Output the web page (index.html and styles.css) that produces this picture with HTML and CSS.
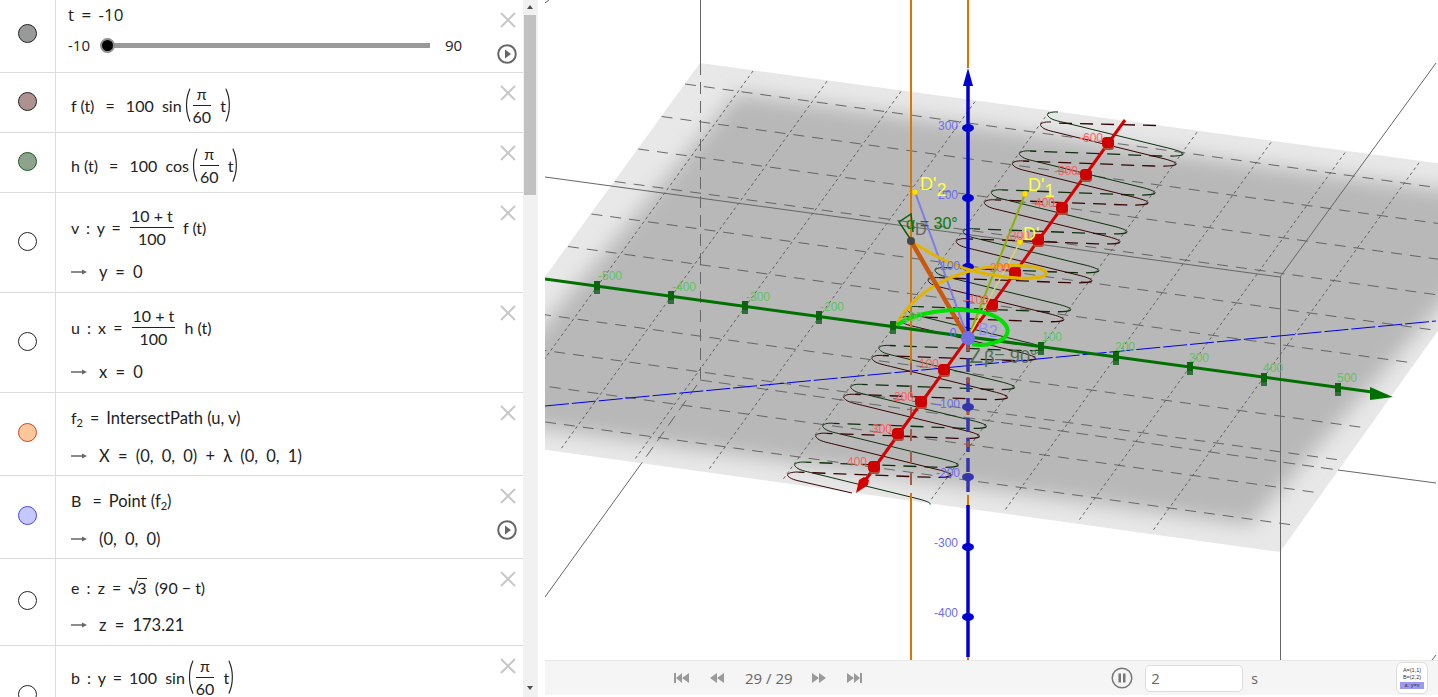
FILE: index.html
```html
<!DOCTYPE html>
<html lang="en">
<head>
  <meta charset="UTF-8" />
  <title>GeoGebra 3D</title>
  <link rel="stylesheet" href="styles.css">
</head>
<body>
  <div class="app">
    <aside class="algebra">
      <div class="rows">
        <div class="row row-slider">
          <div class="marble-cell"><span class="marble marble-gray"></span></div>
          <div class="expr">
            <div class="slider-title">t = -10</div>
            <div class="slider-line">
              <span class="slider-min">-10</span>
              <div class="slider-track"><span class="slider-knob"></span></div>
              <span class="slider-max">90</span>
            </div>
          </div>
          <div class="actions">
            <svg class="close" viewBox="0 0 16 16"><path d="M1 1L15 15M15 1L1 15"/></svg>
            <svg class="play" viewBox="0 0 20 20"><circle cx="10" cy="10" r="8.8"/><path d="M8 5.5L14 10L8 14.5Z"/></svg>
          </div>
        </div>

        <div class="row row-60">
          <div class="marble-cell"><span class="marble marble-rose"></span></div>
          <div class="expr">
            <div class="math">f (t) <i class="eq">=</i> 100&nbsp; sin <span class="paren">(</span><span class="frac"><span>π</span><span>60</span></span>&nbsp; t<span class="paren">)</span></div>
          </div>
          <div class="actions"><svg class="close" viewBox="0 0 16 16"><path d="M1 1L15 15M15 1L1 15"/></svg></div>
        </div>

        <div class="row row-60">
          <div class="marble-cell"><span class="marble marble-green"></span></div>
          <div class="expr">
            <div class="math">h (t) <i class="eq">=</i> 100&nbsp; cos <span class="paren">(</span><span class="frac"><span>π</span><span>60</span></span>&nbsp; t<span class="paren">)</span></div>
          </div>
          <div class="actions"><svg class="close" viewBox="0 0 16 16"><path d="M1 1L15 15M15 1L1 15"/></svg></div>
        </div>

        <div class="row row-100">
          <div class="marble-cell"><span class="marble"></span></div>
          <div class="expr">
            <div class="math"><span class="lhs">v : y = </span><span class="frac"><span>10 + t</span><span>100</span></span>&nbsp; f (t)</div>
            <div class="math output"><svg class="arrow" viewBox="0 0 16 6"><path d="M0 3H13"/><path class="tip" d="M11 0.5L16 3L11 5.5Z"/></svg>y = 0</div>
          </div>
          <div class="actions"><svg class="close" viewBox="0 0 16 16"><path d="M1 1L15 15M15 1L1 15"/></svg></div>
        </div>

        <div class="row row-100">
          <div class="marble-cell"><span class="marble"></span></div>
          <div class="expr">
            <div class="math"><span class="lhs">u : x = </span><span class="frac"><span>10 + t</span><span>100</span></span>&nbsp; h (t)</div>
            <div class="math output"><svg class="arrow" viewBox="0 0 16 6"><path d="M0 3H13"/><path class="tip" d="M11 0.5L16 3L11 5.5Z"/></svg>x = 0</div>
          </div>
          <div class="actions"><svg class="close" viewBox="0 0 16 16"><path d="M1 1L15 15M15 1L1 15"/></svg></div>
        </div>

        <div class="row row-83">
          <div class="marble-cell"><span class="marble marble-orange"></span></div>
          <div class="expr">
            <div class="math"><span>f<sub>2</sub></span> <i class="eq">=</i> <span class="word">IntersectPath (u, v)</span></div>
            <div class="math output"><svg class="arrow" viewBox="0 0 16 6"><path d="M0 3H13"/><path class="tip" d="M11 0.5L16 3L11 5.5Z"/></svg>X = (0, 0, 0) + λ (0, 0, 1)</div>
          </div>
          <div class="actions"><svg class="close" viewBox="0 0 16 16"><path d="M1 1L15 15M15 1L1 15"/></svg></div>
        </div>

        <div class="row row-83">
          <div class="marble-cell"><span class="marble marble-blue"></span></div>
          <div class="expr">
            <div class="math">B <i class="eq">=</i> <span class="word">Point (f<sub>2</sub>)</span></div>
            <div class="math output"><svg class="arrow" viewBox="0 0 16 6"><path d="M0 3H13"/><path class="tip" d="M11 0.5L16 3L11 5.5Z"/></svg>(0, 0, 0)</div>
          </div>
          <div class="actions">
            <svg class="close" viewBox="0 0 16 16"><path d="M1 1L15 15M15 1L1 15"/></svg>
            <svg class="play" viewBox="0 0 20 20"><circle cx="10" cy="10" r="8.8"/><path d="M8 5.5L14 10L8 14.5Z"/></svg>
          </div>
        </div>

        <div class="row row-87">
          <div class="marble-cell"><span class="marble"></span></div>
          <div class="expr">
            <div class="math"><span class="lhs">e : z = </span>√<span class="radicand">3</span>&nbsp; (90 − t)</div>
            <div class="math output"><svg class="arrow" viewBox="0 0 16 6"><path d="M0 3H13"/><path class="tip" d="M11 0.5L16 3L11 5.5Z"/></svg>z = 173.21</div>
          </div>
          <div class="actions"><svg class="close" viewBox="0 0 16 16"><path d="M1 1L15 15M15 1L1 15"/></svg></div>
        </div>

        <div class="row row-100 row-last">
          <div class="marble-cell"><span class="marble"></span></div>
          <div class="expr expr-top">
            <div class="math"><span class="lhs">b : y = </span>100&nbsp; sin <span class="paren">(</span><span class="frac"><span>π</span><span>60</span></span>&nbsp; t<span class="paren">)</span></div>
          </div>
          <div class="actions"><svg class="close" viewBox="0 0 16 16"><path d="M1 1L15 15M15 1L1 15"/></svg></div>
        </div>
      </div>

      <div class="scrollbar">
        <span class="scroll-up"></span>
        <span class="scroll-thumb"></span>
        <span class="scroll-down"></span>
      </div>
    </aside>

    <main class="view">
      <svg class="scene" viewBox="545 0 893 660">
        <defs>
          <clipPath id="planeClip"><polygon points="700,63 1547,178 1280,552 431,434"/></clipPath>
          <filter id="soft" x="-20%" y="-20%" width="140%" height="140%"><feGaussianBlur stdDeviation="10"/></filter>
          <line id="gridY" x1="753" y1="71" x2="486" y2="440"/>
          <line id="gridX" x1="685" y1="84" x2="1527" y2="200"/>
          <path id="turnSolid" d="M1058 112C1050 111.500 1046 114 1048 116C1051 120 1058 121 1066 123L1172 149C1181 151.500 1184 153 1183 154.500"/>
          <path id="turnDash" d="M1183 154.500C1180 156 1172 156.500 1160 156L1030 151"/>
          <g id="tickRed"><rect class="tick-shade" x="-5" y="-1" width="11" height="8" rx="3"/><rect class="tick-red" x="-6" y="-6" width="12" height="11" rx="4"/></g>
          <g id="tickGreen"><rect class="tick-green-shade" x="-3" y="0" width="6" height="7"/><rect class="tick-green" x="-3" y="-6" width="6" height="9"/></g>
        </defs>

        <!-- plane -->
        <polygon class="plane-edge" points="700,63 1547,178 1280,552 431,434"/>
        <g clip-path="url(#planeClip)">
          <polygon class="plane-core" filter="url(#soft)" points="737,93 1530,202 1250,525 467,418"/>
          <g class="grid-y">
            <use href="#gridY"/>
            <use href="#gridY" x="74" y="10.200"/>
            <use href="#gridY" x="148" y="20.400"/>
            <use href="#gridY" x="222" y="30.600"/>
            <use href="#gridY" x="296" y="40.800"/>
            <use href="#gridY" x="370" y="51"/>
            <use href="#gridY" x="444" y="61.200"/>
            <use href="#gridY" x="518" y="71.400"/>
            <use href="#gridY" x="592" y="81.600"/>
            <use href="#gridY" x="666" y="91.800"/>
          </g>
          <g class="grid-x">
            <use href="#gridX"/>
            <use href="#gridX" x="-23.400" y="32.500"/>
            <use href="#gridX" x="-46.800" y="65"/>
            <use href="#gridX" x="-70.200" y="97.500"/>
            <use href="#gridX" x="-93.600" y="130"/>
            <use href="#gridX" x="-117" y="162.500"/>
            <use href="#gridX" x="-163.800" y="227.500"/>
            <use href="#gridX" x="-187.200" y="260"/>
            <use href="#gridX" x="-210.600" y="292.500"/>
            <use href="#gridX" x="-234" y="325"/>
          </g>
        </g>

        <!-- bounding box -->
        <path class="box" d="M700.500 0V63M1280.500 277V660M545 177L1280 277L1436 63M1338 470L1436 483M545 597L641 464M545 3L549 0M1432 660L1436 655"/>
        <path class="box box-dash" d="M700.500 63V380L641 464M700 380L1338 470"/>

        <!-- curves -->
        <g class="helix helix-green">
          <use href="#turnSolid"/><use href="#turnDash" class="dash"/>
          <g transform="translate(-28.100 38.900)"><use href="#turnSolid"/><use href="#turnDash" class="dash"/></g>
          <g transform="translate(-56.200 77.800)"><use href="#turnSolid"/><use href="#turnDash" class="dash"/></g>
          <g transform="translate(-84.300 116.700)"><use href="#turnSolid"/><use href="#turnDash" class="dash"/></g>
          <g transform="translate(-112.400 155.600)"><use href="#turnSolid"/><use href="#turnDash" class="dash"/></g>
          <g transform="translate(-140.500 194.500)"><use href="#turnSolid"/><use href="#turnDash" class="dash"/></g>
          <g transform="translate(-168.600 233.400)"><use href="#turnSolid"/><use href="#turnDash" class="dash"/></g>
          <g transform="translate(-196.700 272.300)"><use href="#turnSolid"/><use href="#turnDash" class="dash"/></g>
          <g transform="translate(-224.800 311.200)"><use href="#turnSolid"/><use href="#turnDash" class="dash"/></g>
          <g transform="translate(-252.900 350.100)"><use href="#turnSolid"/></g>
        </g>
        <g class="helix helix-red">
          <path class="dash" d="M1156 125.500L1052 123"/>
          <g transform="translate(-7 10)">
            <use href="#turnSolid"/><use href="#turnDash" class="dash"/>
            <g transform="translate(-28.100 38.900)"><use href="#turnSolid"/><use href="#turnDash" class="dash"/></g>
            <g transform="translate(-56.200 77.800)"><use href="#turnSolid"/><use href="#turnDash" class="dash"/></g>
            <g transform="translate(-84.300 116.700)"><use href="#turnSolid"/><use href="#turnDash" class="dash"/></g>
            <g transform="translate(-112.400 155.600)"><use href="#turnSolid"/><use href="#turnDash" class="dash"/></g>
            <g transform="translate(-140.500 194.500)"><use href="#turnSolid"/><use href="#turnDash" class="dash"/></g>
            <g transform="translate(-168.600 233.400)"><use href="#turnSolid"/><use href="#turnDash" class="dash"/></g>
            <g transform="translate(-196.700 272.300)"><use href="#turnSolid"/><use href="#turnDash" class="dash"/></g>
            <g transform="translate(-224.800 311.200)"><use href="#turnSolid"/><use href="#turnDash" class="dash"/></g>
          </g>
          <path d="M798 472C790 472 786 474 788 476C791 480 800 481 808 483L852 493"/>
        </g>

        <!-- blue line in the plane -->
        <path class="line-blue" d="M545 406L1436 321"/>

        <!-- orange lines -->
        <path class="orange" d="M911 0V363M911 493V660M968 0V68M968 495V505M968 657V660"/>
        <path class="orange-under" d="M911 363V493"/>

        <!-- axes -->
        <path class="axis-x" d="M545 279L1372 392"/>
        <polygon class="fill-x" points="1370,387 1393,397 1370,400"/>
        <g class="ticks">
          <use href="#tickGreen" x="597" y="287"/>
          <use href="#tickGreen" x="671" y="297"/>
          <use href="#tickGreen" x="745" y="307"/>
          <use href="#tickGreen" x="819" y="317"/>
          <use href="#tickGreen" x="893" y="327"/>
          <use href="#tickGreen" x="1041" y="348"/>
          <use href="#tickGreen" x="1116" y="358"/>
          <use href="#tickGreen" x="1190" y="368"/>
          <use href="#tickGreen" x="1264" y="379"/>
          <use href="#tickGreen" x="1338" y="389"/>
        </g>

        <path class="axis-y" d="M1125 120L862 485"/>
        <polygon class="fill-y" points="856,493 859,480 864,477 869,480 868,485"/>
        <g class="ticks">
          <use href="#tickRed" x="1108" y="143"/>
          <use href="#tickRed" x="1086" y="175"/>
          <use href="#tickRed" x="1062" y="208"/>
          <use href="#tickRed" x="1038" y="240"/>
          <use href="#tickRed" x="1015" y="273"/>
          <use href="#tickRed" x="992" y="305"/>
          <use href="#tickRed" x="944" y="370"/>
          <use href="#tickRed" x="921" y="402"/>
          <use href="#tickRed" x="898" y="434"/>
          <use href="#tickRed" x="874" y="467"/>
        </g>

        <path class="axis-z" d="M968 80V338M968 505V657"/>
        <path class="axis-z-under" d="M968 338V495"/>
        <path class="axis-z-brown" d="M968 345V495"/>
        <polygon class="fill-z" points="968,68 973,86 963,86"/>
        <ellipse class="tick-z" cx="968" cy="128" rx="6" ry="4"/>
        <ellipse class="tick-z" cx="968" cy="198" rx="6" ry="4"/>
        <ellipse class="tick-z" cx="968" cy="267" rx="6" ry="4"/>
        <ellipse class="tick-z-under" cx="968" cy="407" rx="6" ry="4"/>
        <ellipse class="tick-z-under" cx="968" cy="477" rx="6" ry="4"/>
        <ellipse class="tick-z" cx="968" cy="547" rx="6" ry="4"/>
        <ellipse class="tick-z" cx="968" cy="617" rx="6" ry="4"/>

        <!-- construction -->
        <path class="seg-d1" d="M1025 194L968 338"/>
        <path class="seg-d" d="M1020 242L968 338"/>
        <path class="seg-d2" d="M915 192L968 338"/>
        <path class="gold" d="M911 241C925 250 945 263 970 270C995 277 1030 281 1044 276C1052 272 1040 267 1025 266C1000 264 975 268 955 276C930 285 905 305 897 325"/>
        <path class="seg-brown" d="M911 241L967 338"/>
        <path class="ring" d="M897 325C915 312 950 308 975 311C1000 314 1010 326 1007 334C1004 342 985 347 972 344"/>
        <path class="wedge" d="M911 240L899 222L911 214L913 232"/>
        <circle class="pt-yellow" cx="915" cy="192" r="3"/>
        <circle class="pt-yellow" cx="1025" cy="194" r="3"/>
        <circle class="pt-yellow" cx="1020" cy="242" r="3"/>
        <circle class="pt-dark" cx="911" cy="241" r="4"/>
        <circle class="pt-origin" cx="968" cy="338" r="7"/>

        <!-- labels -->
        <g class="lbl-x">
          <text x="610" y="280">-500</text><text x="684" y="291">-400</text><text x="758" y="301">-300</text><text x="832" y="311">-200</text><text x="910" y="321">-100</text>
          <text x="1052" y="341">100</text><text x="1125" y="351">200</text><text x="1199" y="362">300</text><text x="1273" y="372">400</text><text x="1347" y="382">500</text>
        </g>
        <g class="lbl-y">
          <text x="1091" y="142">-600</text><text x="1066" y="175">-500</text><text x="1043" y="207">-400</text><text x="1018" y="240">-300</text><text x="998" y="272">-200</text><text x="977" y="304">-100</text>
          <text x="929" y="368">100</text><text x="904" y="401">200</text><text x="882" y="433">300</text><text x="857" y="466">400</text>
        </g>
        <g class="lbl-z">
          <text x="948" y="130">300</text><text x="948" y="199">200</text><text x="950" y="270">100</text>
          <text x="953" y="337">0</text>
          <text x="948" y="408">-100</text><text x="948" y="477">-200</text><text x="946" y="547">-300</text><text x="946" y="617">-400</text>
        </g>
        <text class="lbl-b" x="978" y="335">B<tspan dy="2">2</tspan></text>
        <text class="lbl-pt" x="920" y="190">D'<tspan dx="0" dy="6">2</tspan></text>
        <text class="lbl-pt" x="1028" y="191">D'<tspan dy="6">1</tspan></text>
        <text class="lbl-pt" x="1023" y="240">D'</text>
        <text class="lbl-d" x="915" y="235">D</text>
        <text class="lbl-alpha" x="906" y="229">α = 30°</text>
        <text class="lbl-beta" x="968" y="363">∠β= 90°</text>
      </svg>

      <div class="player">
        <div class="nav-left">
          <svg class="nav" viewBox="0 0 16 12"><path d="M1 1H3V11H1ZM9 1V11L3 6ZM16 1V11L9 6Z"/></svg>
          <svg class="nav" viewBox="0 0 16 12"><path d="M8 1V11L1 6ZM15 1V11L8 6Z"/></svg>
          <span class="steps">29 / 29</span>
          <svg class="nav" viewBox="0 0 16 12"><path d="M1 1V11L8 6ZM8 1V11L15 6Z"/></svg>
          <svg class="nav" viewBox="0 0 16 12"><path d="M0 1V11L7 6ZM7 1V11L13 6ZM13 1H15V11H13Z"/></svg>
        </div>
        <div class="nav-right">
          <svg class="pause" viewBox="0 0 22 22"><circle cx="11" cy="11" r="9.800"/><path d="M7.500 6.500H10V15.500H7.500ZM12 6.500H14.500V15.500H12Z"/></svg>
          <div class="speed">2</div>
          <span class="unit">s</span>
          <div class="table-btn">
            <span>A=(1,1)</span>
            <span>B=(2,2)</span>
            <span class="hl">a: y=x</span>
          </div>
        </div>
      </div>
    </main>
  </div>
</body>
</html>
```

FILE: styles.css
```css
html, body {
  margin: 0;
  height: 100%;
  overflow: hidden;
  background: white;
}

.app {
  display: flex;
  height: 697px;
  font-family: "Open Sans", sans-serif;
  color: #222;
}

/* algebra panel */
.algebra {
  display: flex;
  width: 538px;
  height: 697px;
  flex: none;
  overflow: hidden;
}

.rows {
  width: 523px;
  flex: none;
}

.row {
  display: flex;
  box-sizing: border-box;
  border-bottom: 1px solid #dcdcdc;
}

.row-slider { height: 73px; }
.row-60 { height: 60px; }
.row-100 { height: 100px; }
.row-83 { height: 83px; }
.row-87 { height: 87px; }

.marble-cell {
  display: flex;
  align-items: center;
  justify-content: center;
  width: 56px;
  flex: none;
  box-sizing: border-box;
  padding-bottom: 3px;
  border-right: 1px solid #dcdcdc;
}

.row-slider .marble-cell { padding-bottom: 6px; }

.marble {
  display: block;
  width: 17px;
  height: 17px;
  border-radius: 50%;
  border: 1.500px solid #222;
  background: white;
}

.marble-gray { background: #979a98; }
.marble-rose { background: #ae9292; }
.marble-green { background: #8da38d; border-color: #1d5a1d; }
.marble-orange { background: #fcc79a; border-color: #d8421a; }
.marble-blue { background: #c6c8fb; border-color: #4a4ad0; }

.expr {
  flex: 1;
  display: flex;
  flex-direction: column;
  justify-content: center;
  box-sizing: border-box;
  padding-left: 15px;
  padding-top: 5px;
  gap: 16px;
}

.row-100 .expr {
  padding-top: 14px;
  gap: 23px;
}

.row-87 .expr {
  padding-top: 8px;
  gap: 15px;
}

.expr-top {
  justify-content: flex-start;
}

.row-last .expr {
  padding-top: 20px;
}

.math {
  display: flex;
  align-items: center;
  font-family: Lato, sans-serif;
  font-size: 16px;
  white-space: pre;
  height: 22px;
  color: #222;
}

.lhs {
  word-spacing: 3px;
}

.math sub {
  font-size: 11px;
  vertical-align: -3px;
  line-height: 0;
}

.word {
  font-size: 16.500px;
}

.eq {
  font-style: normal;
  margin: 0 7px;
}

.output {
  font-size: 16.500px;
  word-spacing: 4px;
}

.arrow {
  width: 16px;
  height: 6px;
  margin-right: 12px;
  flex: none;
}

.arrow path {
  stroke: #666;
  stroke-width: 1.500;
  fill: none;
}

.arrow .tip {
  fill: #666;
  stroke: none;
}

.frac {
  display: inline-flex;
  flex-direction: column;
  align-items: center;
  line-height: 22px;
  margin: 0 1px 0 2px;
}

.paren + .frac {
  margin-left: 0;
}

.frac span:first-child {
  border-bottom: 1px solid #222;
  align-self: stretch;
  text-align: center;
  padding: 0 1px;
}

.paren {
  font-size: 38px;
  font-weight: 300;
  line-height: 30px;
  transform: scaleX(.7);
  margin: -6px 0 0 -3px;
}

.radicand {
  border-top: 1px solid #222;
  margin-left: -1px;
  line-height: 18px;
}

.actions {
  width: 23px;
  flex: none;
}

.close {
  display: block;
  width: 16px;
  height: 16px;
  margin: 12px 0 0 0;
}

.close path {
  stroke: #c8c8c8;
  stroke-width: 2;
  fill: none;
}

.play {
  display: block;
  width: 20px;
  height: 20px;
  margin: 16px 0 0 -3px;
}

.play circle {
  fill: none;
  stroke: #666;
  stroke-width: 2;
}

.play path {
  fill: #666;
}

/* slider row */
.row-slider .expr {
  justify-content: flex-start;
  gap: 0;
  padding-left: 12px;
  padding-top: 0;
}

.slider-title {
  font-size: 17px;
  line-height: 22px;
  margin-top: 4px;
  word-spacing: 3px;
}

.slider-line {
  display: flex;
  align-items: center;
  font-size: 15px;
  margin-top: 9px;
  height: 20px;
}

.slider-min {
  width: 39px;
}

.slider-track {
  position: relative;
  width: 323px;
  height: 5px;
  background: #999;
}

.slider-knob {
  position: absolute;
  left: -7px;
  top: -5px;
  width: 11px;
  height: 11px;
  background: black;
  border: 2px solid #8f8f8f;
  border-radius: 50%;
}

.slider-max {
  margin-left: 15px;
}

/* scrollbar */
.scrollbar {
  position: relative;
  width: 15px;
  flex: none;
  background: #f1f1f1;
}

.scroll-up, .scroll-down {
  position: absolute;
  left: 4px;
  width: 0;
  height: 0;
  border-left: 3.500px solid transparent;
  border-right: 3.500px solid transparent;
}

.scroll-up {
  top: 5px;
  border-bottom: 4px solid #505050;
}

.scroll-down {
  bottom: 7px;
  border-top: 4px solid #505050;
}

.scroll-thumb {
  position: absolute;
  top: 15px;
  left: 1px;
  width: 12px;
  height: 180px;
  background: #c1c1c1;
}

/* 3d view */
.view {
  margin-left: 7px;
  width: 893px;
  flex: none;
}

.scene {
  display: block;
  width: 893px;
  height: 660px;
  font-family: "Liberation Sans", sans-serif;
}

.plane-edge { fill: #e8e8e8; }
.plane-core { fill: #b8b8b8; }

.grid-y use {
  stroke: #555;
  stroke-width: .9;
  stroke-dasharray: 3 3;
}

.grid-x use {
  stroke: #5a5a5a;
  stroke-width: .9;
  stroke-dasharray: 11 8;
}

.box {
  fill: none;
  stroke: #666;
  stroke-width: 1;
}

.box-dash {
  stroke-dasharray: 12 7;
}

.helix {
  fill: none;
  stroke-width: 1;
}

.helix-green { stroke: #0b300b; }
.helix-red { stroke: #360404; }

.dash {
  stroke-dasharray: 13 8;
  stroke-width: 1.300;
}

.line-blue {
  fill: none;
  stroke: #0000ee;
  stroke-width: 1;
  stroke-dasharray: 24 3;
}

.orange {
  fill: none;
  stroke: #dd7400;
  stroke-width: 2;
}

.orange-under {
  fill: none;
  stroke: #a85a42;
  stroke-width: 2;
  stroke-dasharray: 12 10;
}

.axis-x {
  stroke: #007000;
  stroke-width: 3;
}

.fill-x { fill: #007000; }
.tick-green { fill: #0b660b; }
.tick-green-shade { fill: #2f6f3a; }

.axis-y {
  stroke: #d60000;
  stroke-width: 3;
}

.fill-y { fill: #d60000; }
.tick-red { fill: #cf0000; }
.tick-shade { fill: #a5503a; }

.axis-z {
  stroke: #0000d2;
  stroke-width: 3.500;
}

.axis-z-under {
  stroke: #3535ac;
  stroke-width: 3.500;
  stroke-dasharray: 14 6;
}

.axis-z-brown {
  stroke: #a5503a;
  stroke-width: 3;
  stroke-dasharray: 6 26;
}

.fill-z { fill: #0000d2; }
.tick-z { fill: #0000d2; }
.tick-z-under { fill: #3535ac; }

.seg-d1 {
  stroke: #8cb000;
  stroke-width: 2;
}

.seg-d {
  stroke: #d8d860;
  stroke-width: 1.500;
}

.seg-d2 {
  stroke: #7c7ce8;
  stroke-width: 2;
}

.gold {
  fill: none;
  stroke: #e2b400;
  stroke-width: 3;
}

.seg-brown {
  stroke: #c8590e;
  stroke-width: 4.500;
}

.ring {
  fill: none;
  stroke: #00e000;
  stroke-width: 4;
}

.wedge {
  fill: none;
  stroke: #0b5c0b;
  stroke-width: 1.500;
}

.pt-yellow { fill: #ffdf00; stroke: #d0b000; stroke-width: .5; }
.pt-dark { fill: #444; }
.pt-origin { fill: #7070e4; }

.lbl-x, .lbl-y, .lbl-z {
  font-size: 12px;
  text-anchor: middle;
}

.lbl-x { fill: #5fc45f; }
.lbl-y { fill: #ff6060; }
.lbl-z { fill: #6c6cf0; }
.lbl-b { fill: #8f8ff5; font-size: 16px; }

.lbl-pt {
  fill: #ffff3c;
  font-size: 18px;
}

.lbl-d {
  fill: #666;
  font-size: 16px;
}

.lbl-alpha {
  fill: #0b7a0b;
  font-size: 16px;
}

.lbl-beta {
  fill: #4f6f4f;
  font-size: 18px;
}

/* animation bar */
.player {
  display: flex;
  justify-content: space-between;
  align-items: center;
  box-sizing: border-box;
  height: 35px;
  padding-left: 128px;
  padding-right: 10px;
  background: #f5f5f5;
  border-top: 1px solid #e8e8e8;
  color: #666;
}

.nav-left, .nav-right {
  display: flex;
  align-items: center;
}

.nav {
  width: 16px;
  height: 12px;
  fill: #9a9a9a;
  margin-right: 20px;
}

.steps {
  font-size: 15px;
  margin-right: 18px;
}

.pause {
  width: 22px;
  height: 22px;
  margin-right: 12px;
}

.pause circle {
  fill: none;
  stroke: #777;
  stroke-width: 1.500;
}

.pause path { fill: #777; }

.speed {
  box-sizing: border-box;
  width: 98px;
  height: 27px;
  padding-left: 5px;
  line-height: 24px;
  font-size: 15px;
  background: white;
  border: 1px solid #ddd;
  border-radius: 5px;
}

.unit {
  margin-left: 8px;
  margin-right: 138px;
  font-size: 14px;
}

.table-btn {
  display: flex;
  flex-direction: column;
  justify-content: center;
  align-items: center;
  box-sizing: border-box;
  width: 32px;
  height: 32px;
  background: white;
  border: 1px solid #ddd;
  border-radius: 6px;
  font-family: "Liberation Sans", sans-serif;
  font-size: 5.500px;
  line-height: 7.500px;
  color: #333;
}

.table-btn .hl {
  background: #9a9af5;
  align-self: stretch;
  text-align: center;
  margin: 0 3px;
}
```
